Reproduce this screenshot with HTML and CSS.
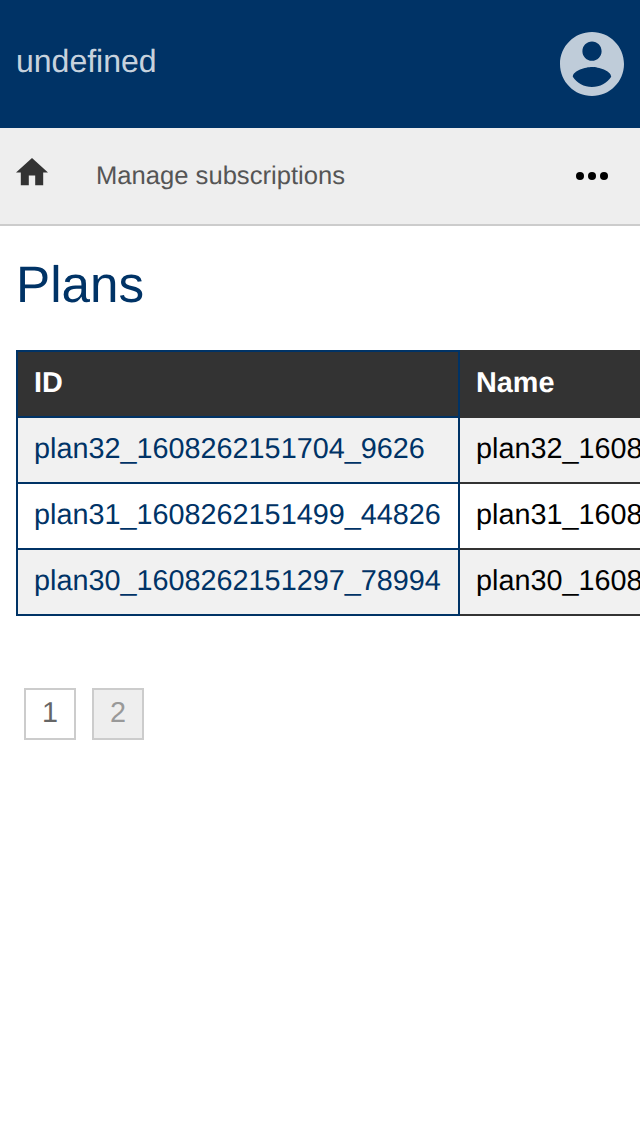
FILE: index.html
```html
<!DOCTYPE html>
<html lang="en">
<head>
<meta charset="utf-8">
<title>Plans</title>
<link rel="stylesheet" href="styles.css">
</head>
<body>
<header class="header">
  <span class="brand">undefined</span>
  <svg class="account" viewBox="2 2 20 20"><path d="M12 2C6.480 2 2 6.480 2 12s4.480 10 10 10 10-4.480 10-10S17.520 2 12 2zm0 3c1.660 0 3 1.340 3 3s-1.340 3-3 3-3-1.340-3-3 1.340-3 3-3zm0 14.200c-2.500 0-4.710-1.280-6-3.220.030-1.990 4-3.080 6-3.080 1.990 0 5.970 1.090 6 3.080-1.290 1.940-3.500 3.220-6 3.220z"/></svg>
</header>
<nav class="nav">
  <svg class="home" viewBox="2 3 20 17"><path d="M10 20v-6h4v6h5v-8h3L12 3 2 12h3v8z"/></svg>
  <span class="nav-link">Manage subscriptions</span>
  <svg class="more" viewBox="0 0 32 8"><circle cx="4" cy="4" r="4"/><circle cx="16" cy="4" r="4"/><circle cx="28" cy="4" r="4"/></svg>
</nav>
<main class="main">
  <h1 class="title">Plans</h1>
  <div class="table-wrap">
    <table class="plans">
      <thead><tr><th class="id">ID</th><th>Name</th></tr></thead>
      <tbody>
        <tr><td class="id">plan32_1608262151704_9626</td><td>plan32_1608262151704_9626</td></tr>
        <tr><td class="id">plan31_1608262151499_44826</td><td>plan31_1608262151499_44826</td></tr>
        <tr><td class="id">plan30_1608262151297_78994</td><td>plan30_1608262151297_78994</td></tr>
      </tbody>
    </table>
  </div>
  <div class="pages"><span class="page">1</span><span class="page off">2</span></div>
</main>
</body>
</html>
```

FILE: styles.css
```css
* { box-sizing: border-box; }
body {
  margin: 0;
  height: 1136px;
  overflow: hidden;
  background: #fff;
  color: #000;
  font-family: "Liberation Sans", Arial, sans-serif;
  text-rendering: geometricPrecision;
}
.header {
  display: flex;
  justify-content: space-between;
  align-items: center;
  height: 128px;
  padding: 0 16px;
  background: #036;
}
.brand {
  padding-bottom: 6px;
  font-size: 32px;
  line-height: 36px;
  color: rgba(255, 255, 255, 0.8);
}
.account { width: 64px; height: 64px; fill: #bfccd9; }
.nav {
  display: flex;
  align-items: center;
  height: 98px;
  padding: 0 32px 0 16px;
  border-bottom: 2px solid #ccc;
  background: #eee;
}
.home { width: 32px; height: 27.2px; margin-bottom: 8px; fill: #333; }
.nav-link { margin-left: 48px; font-size: 25.6px; line-height: 32px; color: #555; }
.more { width: 32px; height: 8px; margin-left: auto; }
.main { padding-left: 16px; }
.title {
  margin: 0;
  padding: 27px 0 33px;
  font-size: 51.2px;
  line-height: 64px;
  font-weight: 400;
  color: #036;
}
.table-wrap { overflow: hidden; }
.plans {
  width: 886px;
  table-layout: fixed;
  border-collapse: collapse;
  font-size: 28.8px;
  line-height: 32px;
  white-space: nowrap;
}
.plans th, .plans td {
  height: 66px;
  padding: 0 16px 2px;
  border: 2px solid #333;
  text-align: left;
}
.plans th { background: #333; color: #fff; }
.plans .id { border-color: #036; }
.plans td.id { color: #036; }
.plans tbody tr:nth-child(odd) { background: #f1f1f1; }
.pages { display: flex; gap: 16px; padding: 72px 8px 0; }
.page {
  width: 52px;
  height: 52px;
  border: 2px solid #ccc;
  font-size: 28.8px;
  line-height: 46px;
  text-align: center;
  color: #666;
}
.off { background: #eee; color: #999; }
```
